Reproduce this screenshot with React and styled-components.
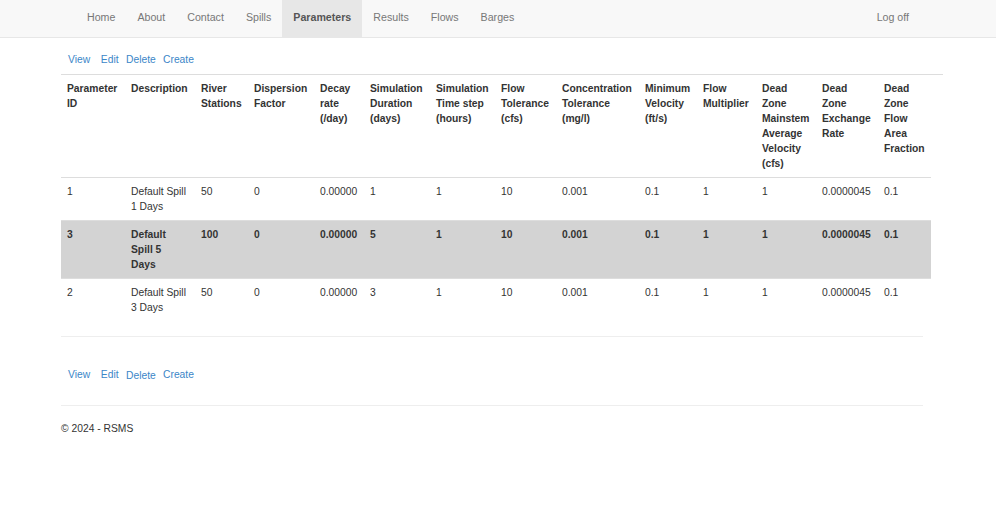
import React from 'react';
import styled, { createGlobalStyle } from 'styled-components';

const GlobalStyle = createGlobalStyle`
  html, body {
    margin: 0;
    padding: 0;
    background: #fff;
  }
  body {
    font-family: 'Liberation Sans', Arial, sans-serif;
    font-size: 10.3px;
    line-height: 15px;
    color: #333;
  }
`;

const Navbar = styled.nav`
  height: 37px;
  background: #f8f8f8;
  border-bottom: 1px solid #e7e7e7;
`;

const NavInner = styled.div`
  width: 844px;
  margin: 0 auto;
  height: 100%;
  display: flex;
  justify-content: space-between;
`;

const NavList = styled.ul`
  display: flex;
  margin: 0;
  padding: 0;
  list-style: none;
`;

const NavItem = styled.li`
  padding: 10px 11px 12px;
  font-size: 10.65px;
  color: ${(p) => (p.$active ? '#555' : '#777')};
  background: ${(p) => (p.$active ? '#e7e7e7' : 'transparent')};
  font-weight: ${(p) => (p.$active ? 700 : 400)};
  cursor: pointer;
`;

const Main = styled.main`
  padding-left: 61px;
`;

const Actions = styled.div`
  display: flex;
  align-items: flex-start;
  padding-left: 7px;
  margin-top: ${(p) => p.$top}px;
  height: 15px;
`;

const ActionLink = styled.a`
  color: #3b86c8;
  text-decoration: none;
  margin-right: ${(p) => p.$gap}px;
  padding-top: ${(p) => p.$drop || 0}px;
  cursor: pointer;
`;

const Table = styled.table`
  margin-top: 7px;
  width: 882px;
  table-layout: fixed;
  border-collapse: collapse;
  border-spacing: 0;
`;

const Th = styled.th`
  text-align: left;
  vertical-align: top;
  font-weight: 700;
  padding: 6px;
  border-top: 1px solid #ddd;
  border-bottom: ${(p) => (p.$spacer ? 'none' : '1px solid #ddd')};
`;

const Line = styled.span`
  display: block;
  white-space: nowrap;
`;

const Row = styled.tr`
  background: ${(p) => (p.$selected ? '#d3d3d3' : 'transparent')};
  font-weight: ${(p) => (p.$selected ? 700 : 400)};
`;

const Td = styled.td`
  vertical-align: top;
  padding: 6px;
  border-top: ${(p) => (p.$first ? 'none' : '1px solid #ddd')};
  white-space: nowrap;
`;

const Rule = styled.hr`
  width: 862px;
  margin: ${(p) => p.$top}px 0 0;
  border: 0;
  border-top: 1px solid #eee;
`;

const Footer = styled.footer`
  margin-top: 15px;
`;

const columns = [
  { w: 64, label: ['Parameter', 'ID'] },
  { w: 70, label: ['Description'] },
  { w: 53, label: ['River', 'Stations'] },
  { w: 66, label: ['Dispersion', 'Factor'] },
  { w: 50, label: ['Decay', 'rate', '(/day)'] },
  { w: 66, label: ['Simulation', 'Duration', '(days)'] },
  { w: 65, label: ['Simulation', 'Time step', '(hours)'] },
  { w: 61, label: ['Flow', 'Tolerance', '(cfs)'] },
  { w: 83, label: ['Concentration', 'Tolerance', '(mg/l)'] },
  { w: 58, label: ['Minimum', 'Velocity', '(ft/s)'] },
  { w: 59, label: ['Flow', 'Multiplier'] },
  { w: 60, label: ['Dead', 'Zone', 'Mainstem', 'Average', 'Velocity', '(cfs)'] },
  { w: 62, label: ['Dead', 'Zone', 'Exchange', 'Rate'] },
  { w: 53, label: ['Dead', 'Zone', 'Flow', 'Area', 'Fraction'] },
];

const rows = [
  { id: 1, desc: ['Default Spill', '1 Days'], stations: 50, dur: 1 },
  { id: 3, desc: ['Default', 'Spill 5', 'Days'], stations: 100, dur: 5, selected: true },
  { id: 2, desc: ['Default Spill', '3 Days'], stations: 50, dur: 3 },
];

function ActionBar({ top, dropDelete }) {
  return (
    <Actions $top={top}>
      <ActionLink $gap={10.7}>View</ActionLink>
      <ActionLink $gap={7.4}>Edit</ActionLink>
      <ActionLink $gap={7.3} $drop={dropDelete ? 1 : 0}>Delete</ActionLink>
      <ActionLink $gap={0}>Create</ActionLink>
    </Actions>
  );
}

export default function App() {
  const navItems = ['Home', 'About', 'Contact', 'Spills', 'Parameters', 'Results', 'Flows', 'Barges'];
  return (
    <>
      <GlobalStyle />
      <Navbar>
        <NavInner>
          <NavList>
            {navItems.map((n) => (
              <NavItem key={n} $active={n === 'Parameters'}>{n}</NavItem>
            ))}
          </NavList>
          <NavList>
            <NavItem>Log off</NavItem>
          </NavList>
        </NavInner>
      </Navbar>

      <Main>
        <ActionBar top={14} />

        <Table>
          <colgroup>
            {columns.map((c, i) => (
              <col key={i} style={{ width: c.w }} />
            ))}
            <col style={{ width: 12 }} />
          </colgroup>
          <thead>
            <tr>
              {columns.map((c, i) => (
                <Th key={i}>
                  {c.label.map((l) => (
                    <Line key={l}>{l}</Line>
                  ))}
                </Th>
              ))}
              <Th $spacer />
            </tr>
          </thead>
          <tbody>
            {rows.map((r, idx) => {
              const first = idx === 0;
              const cells = [
                r.id,
                r.desc.map((l) => <Line key={l}>{l}</Line>),
                r.stations,
                0,
                '0.00000',
                r.dur,
                1,
                10,
                '0.001',
                '0.1',
                1,
                1,
                '0.0000045',
                '0.1',
              ];
              return (
                <Row key={r.id} $selected={r.selected}>
                  {cells.map((c, i) => (
                    <Td key={i} $first={first}>{c}</Td>
                  ))}
                </Row>
              );
            })}
          </tbody>
        </Table>

        <Rule $top={15} />
        <ActionBar top={30} dropDelete />
        <Rule $top={23} />
        <Footer>© 2024 - RSMS</Footer>
      </Main>
    </>
  );
}
